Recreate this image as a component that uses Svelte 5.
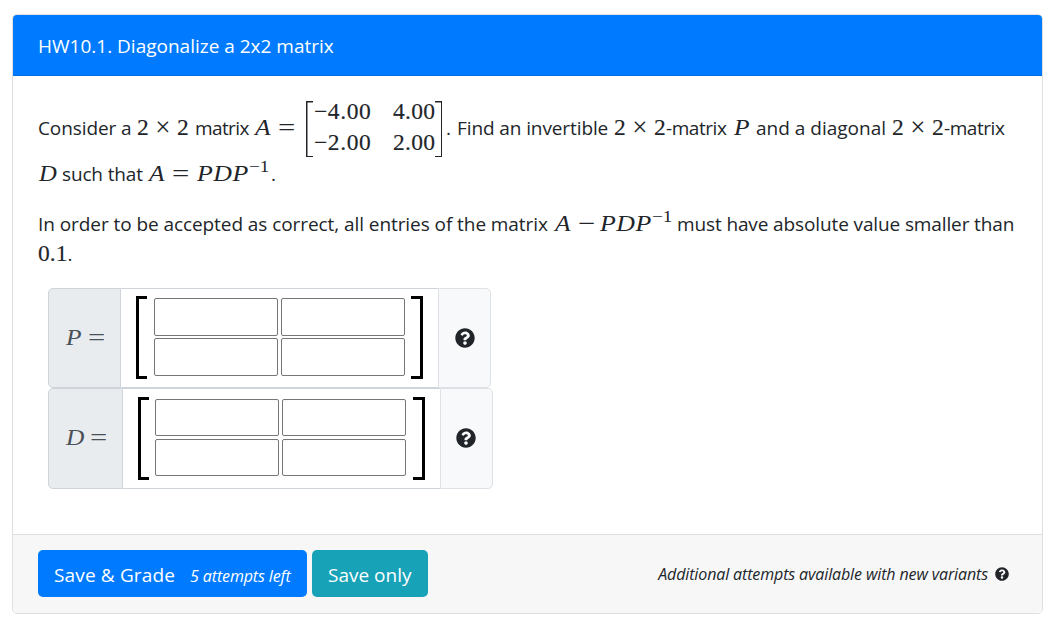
<script>
  let answers = $state([
    { name: 'P', cells: ['', '', '', ''] },
    { name: 'D', cells: ['', '', '', ''] }
  ]);
  const matrix = ['−4.00', '4.00', '−2.00', '2.00'];
</script>

{#snippet help()}
  <svg class="help" viewBox="0 0 512 512" aria-hidden="true">
    <path
      fill="currentColor"
      d="M504 256c0 136.997-111.043 248-248 248S8 392.997 8 256C8 119.083 119.043 8 256 8s248 111.083 248 248zM262.655 90c-54.497 0-89.255 22.957-116.549 63.758-3.536 5.286-2.353 12.415 2.715 16.258l34.699 26.31c5.205 3.947 12.621 3.008 16.665-2.122 17.864-22.658 30.113-35.797 57.303-35.797 20.429 0 45.698 13.148 45.698 32.958 0 14.976-12.363 22.667-32.534 33.976C247.128 238.528 216 254.941 216 296v4c0 6.627 5.373 12 12 12h56c6.627 0 12-5.373 12-12v-1.333c0-28.462 83.186-29.647 83.186-106.667 0-58.002-60.165-102-116.531-102zM256 338c-25.365 0-46 20.635-46 46 0 25.364 20.635 46 46 46s46-20.636 46-46c0-25.365-20.635-46-46-46z"
    />
  </svg>
{/snippet}

{#snippet size()}
  <span class="math num">2</span><span class="math times">×</span><span class="math num">2</span>
{/snippet}

{#snippet inverse()}
  <span class="math pdp">PDP</span><span class="math exp">−1</span>
{/snippet}

<div class="card">
  <div class="card-header">HW10.1. Diagonalize a 2x2 matrix</div>

  <div class="card-body">
    <div class="line first">
      <span class="words w1">Consider a</span>{@render size()}<span class="words w2">matrix</span><span
        class="math var">A</span><span class="math rel">=</span><span class="matrix">
        {#each matrix as entry}
          <span>{entry}</span>
        {/each}
      </span><span class="words dot">.</span><span class="words w3">Find an invertible</span>{@render size()}<span
        class="words w4">-matrix</span><span class="math var">P</span><span class="words w5">and a diagonal</span
      >{@render size()}<span class="words w4">-matrix</span>
    </div>
    <div class="line second">
      <span class="math var-d">D</span><span class="words w6">such that</span><span class="math var">A</span><span
        class="math rel">=</span>{@render inverse()}<span class="words">.</span>
    </div>
    <div class="line third">
      <span class="words w7">In order to be accepted as correct, all entries of the matrix</span><span
        class="math var">A</span><span class="math rel minus">−</span>{@render inverse()}<span class="words w8"
        >must have absolute value smaller than</span>
    </div>
    <div class="line fourth"><span class="math upright">0.1</span><span class="words">.</span></div>

    <div class="answers">
      {#each answers as answer}
        <div class="input-group group-{answer.name}">
          <div class="prepend"><span class="name">{answer.name}</span><span class="eq">=</span></div>
          <div class="entry">
            <div class="bracket left"></div>
            <div class="cells">
              {#each answer.cells as _, i}
                <input type="text" aria-label="{answer.name} entry {i + 1}" bind:value={answer.cells[i]} />
              {/each}
            </div>
            <div class="bracket right"></div>
          </div>
          <button class="append" type="button" aria-label="Help">{@render help()}</button>
        </div>
      {/each}
    </div>
  </div>

  <div class="card-footer">
    <button class="btn primary" type="button"><span class="save">Save &amp; Grade</span><em>5 attempts left</em></button>
    <button class="btn info" type="button"><span class="save">Save only</span></button>
    <div class="variants"><em>Additional attempts available with new variants</em>{@render help()}</div>
  </div>
</div>

<style>
  :global(body) {
    background: #fff;
  }

  .card {
    display: flex;
    flex-direction: column;
    box-sizing: border-box;
    width: 1031px;
    height: 600px;
    margin: 14px 0 0 12px;
    border: 1px solid #dfdfdf;
    border-radius: 5px;
    font-family: 'Open Sans', 'Noto Sans', sans-serif;
    font-size: 19px;
    color: #212529;
    overflow: hidden;
  }

  .card-header {
    box-sizing: border-box;
    height: 61px;
    padding-left: 25px;
    border-bottom: 1px solid #006fdf;
    background: #007bff;
    color: #fff;
    line-height: 62px;
  }

  .card-body {
    flex: 1;
    padding: 20px 25px 0;
  }

  .line {
    display: flex;
    align-items: baseline;
    white-space: pre;
  }

  .words,
  .math {
    flex: none;
    line-height: 30px;
  }

  .w1 { width: 99px; letter-spacing: -0.1px; }
  .w2 { width: 60px; margin-left: 6px; letter-spacing: -0.6px; }
  .w3 { width: 157px; letter-spacing: -0.1px; }
  .w4 { width: 68px; letter-spacing: -0.45px; }
  .w5 { width: 136px; margin-left: -1px; }
  .w6 { width: 87px; letter-spacing: -0.15px; }
  .w7 { width: 517px; letter-spacing: -0.07px; }
  .w8 { margin-left: 3px; letter-spacing: -0.12px; }
  .dot { width: 11px; margin-left: 4px; }

  .math,
  .matrix {
    font-family: 'Liberation Serif', serif;
    font-size: 23.5px;
  }

  .num,
  .upright,
  .matrix span {
    -webkit-text-stroke: 0.15px currentColor;
  }

  .num {
    width: 12px;
  }

  .times {
    width: 28px;
    text-align: center;
    transform: scale(1.15);
  }

  .var,
  .var-d,
  .pdp {
    font-style: italic;
  }

  .var {
    width: 23px;
    transform: scaleX(1.08);
    transform-origin: left;
  }

  .var-d {
    width: 24px;
    transform: translateX(1px) scaleX(1.05);
    transform-origin: left;
  }

  /* relation signs are wider than the serif face draws them */
  .rel,
  .eq {
    transform: scaleX(1.3);
    transform-origin: left;
  }

  .rel {
    width: 25px;
  }

  .minus {
    width: 22px;
  }

  .pdp {
    width: 52px;
    letter-spacing: 0.5px;
    transform: scaleX(1.1);
    transform-origin: left;
  }

  .exp {
    width: 22px;
    font-size: 17px;
    transform: translateY(-9px) scaleX(1.12);
    transform-origin: left;
  }

  .first {
    height: 64px;
  }

  .first .words,
  .first .math {
    line-height: 62px;
  }

  .matrix {
    display: grid;
    flex: none;
    align-self: flex-start;
    box-sizing: border-box;
    grid-template-columns: 57px 42px;
    gap: 0 22px;
    width: 136px;
    height: 56px;
    margin: 5px 0 0 3px;
    padding-left: 8px;
    line-height: 31px;
    grid-auto-rows: 31px;
    letter-spacing: 0.3px;
    /* square brackets: full side rules with short serifs */
    background:
      linear-gradient(#212529, #212529) left / 1.5px 100% no-repeat,
      linear-gradient(#212529, #212529) right / 1.5px 100% no-repeat,
      linear-gradient(#212529, #212529) left top / 7px 1.5px no-repeat,
      linear-gradient(#212529, #212529) left bottom / 7px 1.5px no-repeat,
      linear-gradient(#212529, #212529) right top / 7px 1.5px no-repeat,
      linear-gradient(#212529, #212529) right bottom / 7px 1.5px no-repeat;
  }

  .matrix span {
    margin-top: -5px;
  }

  .matrix span:nth-child(odd) {
    letter-spacing: 0.6px;
  }

  .second {
    height: 48px;
    margin-top: -2px;
  }

  .third,
  .fourth {
    height: 30px;
  }

  .third {
    margin-top: 2px;
  }

  .answers {
    padding: 20px 0 0 10px;
  }

  .input-group {
    display: flex;
    box-sizing: border-box;
    width: 443px;
    height: 100px;
  }

  .group-D {
    width: 445px;
    height: 101px;
  }

  .prepend {
    display: flex;
    align-items: center;
    box-sizing: border-box;
    width: 73px;
    padding: 0 0 1px 17px;
    border: 1px solid #ced4da;
    border-radius: 5px 0 0 5px;
    background: #e9ecef;
    color: #495057;
    font: italic 23.5px 'Liberation Serif', serif;
  }

  .group-D .prepend {
    width: 75px;
    padding-bottom: 3px;
  }

  .name {
    width: 22px;
    transform: scaleX(1.08);
    transform-origin: left;
  }

  .group-D .name {
    width: 24px;
  }

  .eq {
    font-style: normal;
  }

  .entry {
    display: flex;
    flex: 1;
    box-sizing: border-box;
    padding: 7px 15px;
    border: solid #ced4da;
    border-width: 1px 0;
  }

  .group-D .entry {
    padding-top: 8px;
  }

  .bracket {
    box-sizing: border-box;
    width: 11px;
    height: 83px;
    border: 3px solid #000;
  }

  .left {
    border-right: 0;
  }

  .right {
    width: 12px;
    border-left: 0;
  }

  .cells {
    display: grid;
    grid-template-columns: 124px 124px;
    grid-auto-rows: 38px;
    gap: 2px 3px;
    padding: 2px 6px 0 7px;
  }

  .group-D .cells {
    grid-auto-rows: 37px;
    gap: 3px;
    padding: 2px 7px 0 6px;
  }

  input {
    box-sizing: border-box;
    width: 100%;
    height: 100%;
    border: 1px solid #767676;
    border-radius: 2px;
    font: inherit;
  }

  .append {
    display: flex;
    align-items: center;
    justify-content: center;
    box-sizing: border-box;
    width: 53px;
    padding: 0;
    border: 1px solid #dee2e6;
    border-radius: 0 5px 5px 0;
    background: #f8f9fa;
    color: #212529;
  }

  .group-D .append {
    padding: 0 2px 2px 0;
  }

  .help {
    width: 20px;
    height: 20px;
  }

  .card-footer {
    display: flex;
    gap: 5px;
    box-sizing: border-box;
    height: 79px;
    padding: 15px 33px 0 25px;
    border-top: 1px solid #dfdfdf;
    background: #f7f7f7;
  }

  .btn {
    box-sizing: border-box;
    height: 47px;
    padding: 2px 16px 0;
    border: 0;
    border-radius: 5px;
    color: #fff;
    font: inherit;
    text-align: left;
    white-space: nowrap;
  }

  .primary {
    width: 269px;
    background: #007bff;
  }

  .primary .save {
    letter-spacing: 0.15px;
  }

  .info {
    width: 116px;
    background: #17a2b8;
  }

  em {
    font-size: 16px;
    letter-spacing: -0.12px;
  }

  .btn em {
    margin-left: 15px;
  }

  .variants {
    display: flex;
    align-items: center;
    height: 47px;
    margin-left: auto;
  }

  .variants .help {
    width: 14px;
    height: 14px;
    margin-left: 7px;
  }
</style>
